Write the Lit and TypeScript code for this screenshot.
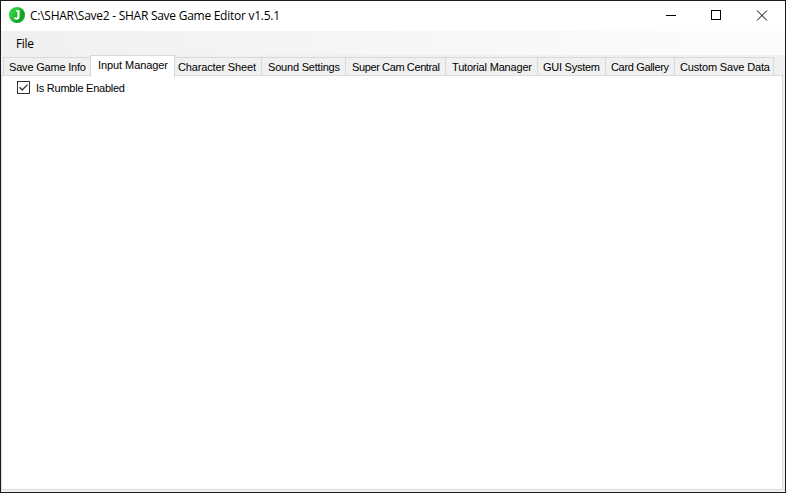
import { LitElement, html, css, svg } from "lit";
import { customElement, property, state } from "lit/decorators.js";

/** One line of text, tracked so that it spans a given advance width. */
@customElement("fit-text")
class FitText extends LitElement {
  @property() text = "";
  @property({ type: Number }) width = 0;
  @state() private tracking = 0;

  static styles = css`
    :host { display: inline-block; white-space: pre; }
    .line { display: inline-block; }
  `;

  firstUpdated() {
    const line = this.renderRoot.querySelector(".line") as HTMLElement;
    const natural = line.getBoundingClientRect().width;
    this.tracking = (this.width - natural) / Math.max(1, this.text.length - 1);
  }

  render() {
    return html`<span class="line" style="letter-spacing:${this.tracking}px">${this.text}</span>`;
  }
}

/* label, tab width, text width, left padding */
const TABS: [string, number, number, number][] = [
  ["Save Game Info", 87, 77, 5],
  ["Input Manager", 85, 70, 7],
  ["Character Sheet", 87, 78, 3],
  ["Sound Settings", 84, 72, 6],
  ["Super Cam Central", 100, 88, 6],
  ["Tutorial Manager", 92, 80, 6],
  ["GUI System", 68, 57, 5],
  ["Card Gallery", 69, 58, 5],
  ["Custom Save Data", 99, 90, 5],
];

@customElement("app-root")
class AppRoot extends LitElement {
  @state() private active = 1;

  static styles = css`
    :host {
      display: flex; flex-direction: column; box-sizing: border-box;
      width: 786px; height: 493px; border: 1px solid #1c1a1d;
      background: #f0f0f0; color: #000; overflow: hidden;
      font: 11px/16px "Liberation Sans", Arial, sans-serif;
    }
    .title {
      display: flex; align-items: center; height: 30px; flex: none;
      background: #fff; padding-left: 7px;
      font-family: "Open Sans", "Noto Sans", sans-serif; font-size: 12px;
    }
    .logo { width: 18px; height: 18px; margin-right: 4px; margin-top: -2px; }
    .buttons { margin-left: auto; margin-right: -1px; display: flex; align-self: flex-start; }
    .buttons svg { width: 46px; height: 29px; display: block; }
    .menu {
      box-sizing: border-box; height: 24px; flex: none; display: flex; align-items: center;
      padding: 1px 0 0 15px; background: linear-gradient(90deg, #f0f0f0, #fcfcfc 95%);
      font-family: "Open Sans", "Noto Sans", sans-serif; font-size: 12px;
    }
    .tabs { display: flex; align-items: flex-end; height: 21px; flex: none; padding-left: 2px; }
    .tab {
      box-sizing: border-box; height: 19px; border: solid #d9d9d9;
      border-width: 1px 1px 0 0; padding-top: 1px; position: relative; flex: none;
    }
    .tab:first-child { border-left-width: 1px; }
    .tab.on {
      background: #fff; margin-left: -1px;
      border-left-width: 1px; z-index: 1; margin-bottom: -1px; height: 22px;
    }
    .panel {
      box-sizing: border-box; flex: 1; margin: -1px 2px 2px 0;
      border: 1px solid #dcdcdc; background: #fff; padding: 4px 0 0 15px;
    }
    .check { display: flex; align-items: flex-start; height: 16px; }
    .box { width: 13px; height: 13px; margin: 1px 6px 0 0; }
  `;

  render() {
    return html`
      <div class="title">
        <svg class="logo" viewBox="0 0 18 18">
          <defs><linearGradient id="g" x1="0" y1="0" x2="1" y2="0.6">
            <stop offset="0.4" stop-color="#2fc93d" /><stop offset="0.75" stop-color="#10a51e" />
          </linearGradient></defs>
          <circle cx="9" cy="9" r="8" fill="url(#g)" />
          <path d="M8 4.3H11.6V10.4Q11.6 13.7 8.6 13.7Q6.4 13.7 5.7 12.3L7 10.9Q7.5 11.7 8.3 11.7Q9.4 11.7 9.4 10.3V5.6H8Z" fill="#fff" />
        </svg>
        <fit-text text="C:\\SHAR\\Save2 - SHAR Save Game Editor v1.5.1" width="250"></fit-text>
        <div class="buttons">
          ${[
            svg`<path d="M18 14.5H28" />`,
            svg`<rect x="17.5" y="9.5" width="9" height="9" />`,
            svg`<path d="M17 9.5L27 19.5M27 9.5L17 19.5" />`,
          ].map((g) => html`<svg viewBox="0 0 46 29" fill="none" stroke="#000" stroke-width="1">${g}</svg>`)}
        </div>
      </div>
      <div class="menu"><fit-text text="File" width="18"></fit-text></div>
      <div class="tabs">
        ${TABS.map(([label, w, tw, pad], i) => html`
          <div class="tab ${i === this.active ? "on" : ""}" @click=${() => (this.active = i)}
            style="width:${w + (i === 0 ? 1 : 0)}px;padding-left:${pad}px">
            <fit-text text=${label} width=${tw}></fit-text>
          </div>`)}
      </div>
      <div class="panel">
        <div class="check">
          <svg class="box" viewBox="0 0 13 13" fill="none" stroke="#333">
            <rect x="0.5" y="0.5" width="12" height="12" />
            <path d="M2.6 6.3L5.2 9L10.5 3.6" stroke-width="1.3" />
          </svg>
          <fit-text text="Is Rumble Enabled" width="89"></fit-text>
        </div>
      </div>`;
  }
}
